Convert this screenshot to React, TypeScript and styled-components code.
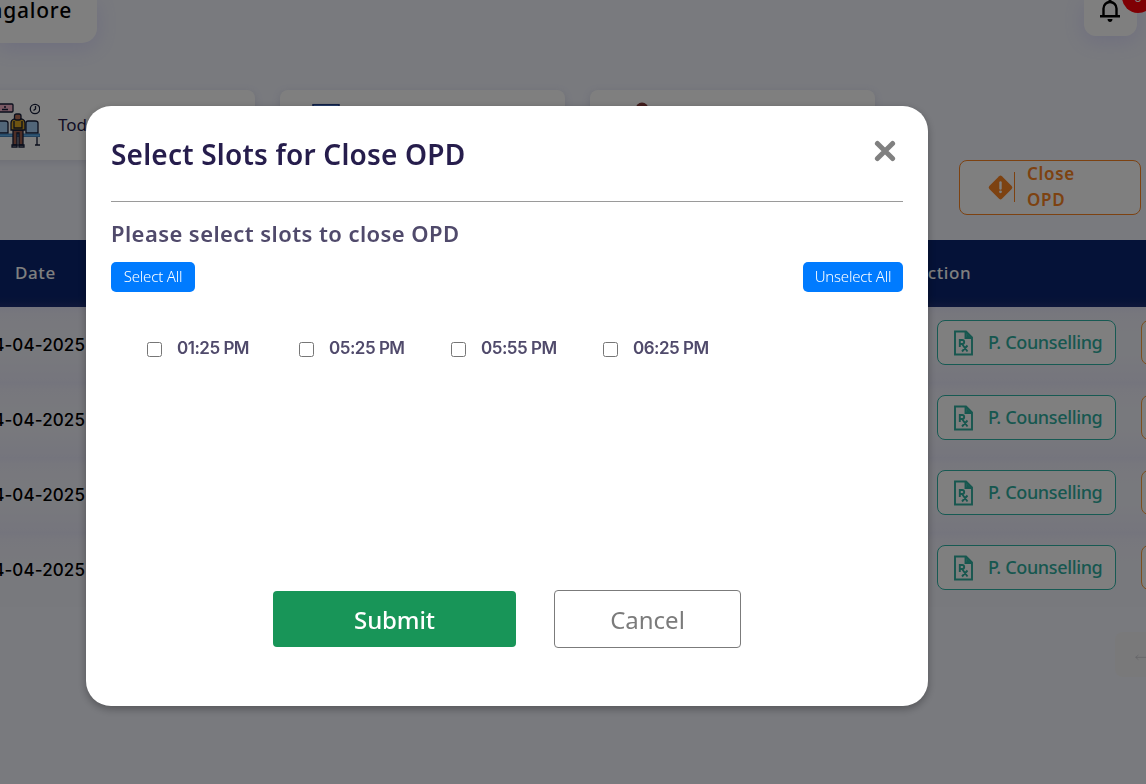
import React, { useState } from "react";
import styled, { createGlobalStyle } from "styled-components";

const GlobalStyle = createGlobalStyle`
  * { box-sizing: border-box; }
  body { margin: 0; overflow: hidden; font-family: "Noto Sans", sans-serif; }
  button { font-family: inherit; padding: 0; cursor: pointer; }
`;

const Page = styled.div`
  width: 1146px;
  height: 784px;
  overflow: hidden;
  background: #f2f4fd;
  color: #000;
`;

const TopBar = styled.header`
  display: flex;
  justify-content: space-between;
  align-items: flex-start;
  height: 90px;
  padding-right: 9px;
`;

const LocationCard = styled.div`
  display: flex;
  justify-content: flex-end;
  width: 97px;
  height: 43px;
  padding-right: 25px;
  border-radius: 0 0 15px 0;
  background: #fff;
  box-shadow: 0 5px 20px rgba(140, 130, 255, 0.2);
  font-size: 21px;
  font-weight: 500;
  line-height: 21px;
  letter-spacing: 0.8px;
  white-space: nowrap;
`;

const BellCard = styled.div`
  position: relative;
  display: flex;
  justify-content: center;
  width: 53px;
  height: 36px;
  padding-right: 2px;
  border-radius: 0 0 12px 12px;
  background: #fff;
  box-shadow: 0 5px 20px rgba(140, 130, 255, 0.2);
`;

const Badge = styled.span`
  position: absolute;
  left: 38px;
  top: -19px;
  width: 32px;
  height: 32px;
  border-radius: 50%;
  background: #ff0008;
  color: #fff;
  font-size: 13px;
  line-height: 32px;
  text-align: center;
`;

const Stats = styled.section`
  display: flex;
  gap: 25px;
  margin-left: -30px;
`;

const StatCard = styled.div`
  display: flex;
  flex: none;
  align-items: flex-start;
  width: 285px;
  height: 70px;
  padding: 11px 0 0 23px;
  border-radius: 8px;
  background: #fff;
  box-shadow: 0 2px 8px rgba(80, 80, 130, 0.15);
`;

const StatLabel = styled.span`
  margin: 13px 0 0 18px;
  color: #261d4c;
  font-size: 17px;
  line-height: 22px;
  white-space: nowrap;
`;

const Actions = styled.div`
  display: flex;
  justify-content: flex-end;
  height: 80px;
  padding-right: 5px;
`;

const CloseOpd = styled.button`
  display: flex;
  align-items: center;
  width: 182px;
  height: 55px;
  padding: 0 40px 1px 27px;
  border: 1px solid #fa8423;
  border-radius: 8px;
  background: #fff;
  color: #fa8423;
  text-align: left;
`;

const CloseOpdText = styled.span`
  margin-left: -1px;
  padding-left: 13px;
  font-size: 17px;
  font-weight: 600;
  line-height: 26px;
  letter-spacing: 0.7px;
`;

const Divider = styled.i`
  width: 1px;
  height: 30px;
  background: #fa8423;
`;

const TableHead = styled.div`
  display: flex;
  align-items: center;
  height: 67px;
  padding: 0 0 2px 15px;
  background: linear-gradient(#0a2470 0 56px, #10286f 61px, #1e2f76);
  color: #fff;
  font-size: 17px;
  font-weight: 500;
  letter-spacing: 0.6px;
`;

const HeadCell = styled.span<{ $width?: number }>`
  flex: none;
  width: ${(p) => (p.$width ? `${p.$width}px` : "auto")};
`;

const Row = styled.div<{ $last?: boolean }>`
  display: flex;
  align-items: center;
  height: 75px;
  background: ${(p) =>
    p.$last
      ? "linear-gradient(#e9e9fb, #efeffb 8px, #f1f2fb 30px, #f1f2fb)"
      : "linear-gradient(#e9e9fb, #efeffb 8px, #f1f2fb 26px, #f1f2fb 48px, #ebebfa)"};
`;

const DateCell = styled.span`
  display: flex;
  flex: none;
  justify-content: flex-end;
  width: 85px;
  margin-right: 852px;
  padding-top: 1px;
  font-family: Inter, sans-serif;
  font-size: 17px;
  font-weight: 500;
  letter-spacing: 0.1px;
  white-space: nowrap;
`;

const CounselButton = styled.button`
  display: flex;
  flex: none;
  align-items: center;
  width: 179px;
  height: 45px;
  margin: -4px 25px 0 0;
  padding-left: 15px;
  gap: 13px;
  border: 1px solid #2fb5a6;
  border-radius: 8px;
  background: #fff;
  color: #2fae9f;
  font-size: 18px;
  font-weight: 500;
  letter-spacing: -0.35px;
  white-space: nowrap;
`;

const ButtonText = styled.span`
  padding-bottom: 2px;
`;

const NextButton = styled(CounselButton)`
  margin-right: 0;
  border-color: #fa9a3c;
`;

const Pager = styled.div`
  display: flex;
  align-items: center;
  height: 45px;
  margin: 25px 0 0 1115px;
  padding: 5px 0 0 20px;
  border-radius: 8px 0 0 8px;
  background: #f3f3f4;
  color: #c3c3cb;
`;

const Overlay = styled.div`
  position: fixed;
  inset: 0;
  padding: 106px 0 0 86px;
  background: rgba(0, 0, 0, 0.5);
`;

const Modal = styled.div`
  display: flex;
  flex-direction: column;
  width: 842px;
  height: 600px;
  padding: 0 25px;
  border-radius: 25px;
  background: #fff;
  box-shadow: 0 3px 9px rgba(0, 0, 0, 0.3);
`;

const ModalHead = styled.div`
  display: flex;
  justify-content: space-between;
  height: 96px;
  padding: 28px 7px 0 0;
  border-bottom: 1px solid #9a9a9a;
`;

const Title = styled.h2`
  margin: 0;
  color: #261d4c;
  font-size: 28px;
  font-weight: 600;
  line-height: 40px;
  letter-spacing: 0.2px;
`;

const CloseIcon = styled.button`
  height: 22px;
  margin-top: 6px;
  border: 0;
  background: none;
`;

const Prompt = styled.h3`
  margin: 16px 0 0;
  color: #504a6b;
  font-size: 22px;
  font-weight: 600;
  line-height: 30px;
  letter-spacing: 0.42px;
`;

const SelectBar = styled.div`
  display: flex;
  justify-content: space-between;
  margin-top: 14px;
`;

const SmallButton = styled.button<{ $width: number }>`
  width: ${(p) => p.$width}px;
  height: 30px;
  padding-bottom: 2px;
  border: 0;
  border-radius: 5px;
  background: #007bff;
  color: #fff;
  font-size: 15px;
  font-weight: 300;
  letter-spacing: -0.2px;
`;

const Slots = styled.div`
  display: flex;
  padding: 43px 0 0 35px;
`;

const Slot = styled.label`
  display: flex;
  align-items: center;
  width: 152px;
  height: 28px;
  color: #504a6b;
  font-family: Inter, sans-serif;
  font-size: 17px;
  font-weight: 600;
  white-space: nowrap;
`;

const SlotText = styled.span`
  padding-bottom: 2px;
  letter-spacing: -0.5px;
`;

const Check = styled.input`
  width: 15px;
  height: 15px;
  margin: 1px 15px 0 1px;
`;

const Footer = styled.div`
  display: flex;
  align-items: center;
  gap: 38px;
  margin: auto 0 58px 162px;
`;

const Submit = styled.button`
  width: 243px;
  height: 56px;
  border: 0;
  border-radius: 4px;
  background: #189558;
  color: #fff;
  font-size: 24px;
  font-weight: 500;
  line-height: 57px;
  letter-spacing: -0.1px;
`;

const Cancel = styled.button`
  width: 187px;
  height: 58px;
  border: 1px solid #7b7b7b;
  border-radius: 4px;
  background: #fff;
  color: #7b7b7b;
  font-size: 24px;
`;

const BellIcon = () => (
  <svg width="22" height="25" viewBox="0 0 22 25" fill="none">
    <path d="M4.500 15V8.500a6.500 6.500 0 0 1 13 0V15M1 16.200h20" stroke="#000" strokeWidth="2.400" />
    <path d="M11 2V0" stroke="#000" strokeWidth="3" />
    <path d="M8.500 19h5c0 4-5 4-5 0Z" fill="#000" />
  </svg>
);

const WaitingIcon = () => (
  <svg width="47" height="47" viewBox="0 0 47 47" fill="none" stroke="#141c38" strokeWidth="1.300">
    <rect x="0" y="3" width="20" height="8" rx="1" fill="#f5b3c8" />
    <path d="M9 8.500h6M11 6h2" />
    <circle cx="42" cy="8" r="4.700" fill="#fff" />
    <path d="M42.500 5v3l-2 1.500" />
    <path d="M2 32V22q0-2 2-2h8q3 0 3 2v10ZM33 32V22q0-2 2-2h7q3 0 3 2v10Z" fill="#a5cdf3" />
    <path d="M0 33h47v2.500H0Z" fill="#62afe8" stroke="#2c6fae" strokeWidth="0.800" />
    <path d="M44 36v8M42 44h5M6 36v8" />
    <path d="M20 29h10v15h-4V32h-2v12h-4Z" fill="#9c5e4f" />
    <path d="M21 18h8q3 1 3 4v7H18v-7q0-3 3-4Z" fill="#dca923" />
    <path d="M21 20v7h8v-7M19 44h5v2h-5ZM26 44h5v2h-5Z" />
    <rect x="21.500" y="13" width="6.500" height="6" rx="2" fill="#b97158" />
  </svg>
);

const MonitorIcon = () => (
  <svg width="44" height="44" viewBox="0 0 44 44">
    <rect x="10" y="3.700" width="26" height="32" fill="#6fa8ff" stroke="#233f8c" strokeWidth="1.500" />
  </svg>
);

const PersonIcon = () => (
  <svg width="50" height="44" viewBox="0 0 50 44">
    <circle cx="29" cy="8" r="6.500" fill="#823a38" />
    <path d="M17 40V22q12-12 24 0v18Z" fill="#6fa8ff" />
  </svg>
);

const WarningIcon = () => (
  <svg width="27" height="27" viewBox="0 0 27 27">
    <rect x="4.600" y="4.600" width="17.800" height="17.800" rx="2" transform="rotate(45 13.500 13.500)" fill="#fa8423" />
    <path d="M13.500 8.500v6" stroke="#fff" strokeWidth="2.400" strokeLinecap="round" />
    <circle cx="13.500" cy="17.800" r="1.400" fill="#fff" />
  </svg>
);

const RxIcon = () => (
  <svg width="22" height="26" viewBox="0 0 22 26" fill="none" stroke="currentColor">
    <path d="M2 1.500h11l6 6v17H2ZM12.500 1.500V8h6.500" strokeWidth="1.900" />
    <path d="M13.500 3v4h4Z" fill="currentColor" strokeWidth="0.500" />
    <path d="M6.800 17V10h2.400a2 2 0 0 1 0 4H6.800M9 14l5.500 7.500M14.500 15.500 9 21.500" strokeWidth="1.900" />
  </svg>
);

const CrossIcon = () => (
  <svg width="22" height="22" viewBox="0 0 22 22">
    <path d="m3.400 3.400 15.200 15.200M18.600 3.400 3.400 18.600" stroke="#808080" strokeWidth="5" strokeLinecap="round" />
  </svg>
);

const ArrowIcon = () => (
  <svg width="16" height="12" viewBox="0 0 16 12" fill="none" stroke="currentColor" strokeWidth="1">
    <path d="M16 6.500H1M5 3 1 6.500 5 10" />
  </svg>
);

const slots = ["01:25 PM", "05:25 PM", "05:55 PM", "06:25 PM"];
const rows = [0, 1, 2, 3];

export default function App() {
  const [chosen, setChosen] = useState<string[]>([]);
  const toggle = (slot: string) =>
    setChosen((list) => (list.includes(slot) ? list.filter((s) => s !== slot) : [...list, slot]));

  return (
    <>
      <GlobalStyle />
      <Page>
        <TopBar>
          <LocationCard>Bangalore</LocationCard>
          <BellCard>
            <BellIcon />
            <Badge>0</Badge>
          </BellCard>
        </TopBar>
        <Stats>
          <StatCard>
            <WaitingIcon />
            <StatLabel>Today</StatLabel>
          </StatCard>
          <StatCard>
            <MonitorIcon />
          </StatCard>
          <StatCard>
            <PersonIcon />
          </StatCard>
        </Stats>
        <Actions>
          <CloseOpd>
            <WarningIcon />
            <Divider />
            <CloseOpdText>
              Close
              <br />
              OPD
            </CloseOpdText>
          </CloseOpd>
        </Actions>
        <TableHead>
          <HeadCell $width={901}>Date</HeadCell>
          <HeadCell>Action</HeadCell>
        </TableHead>
        {rows.map((row) => (
          <Row key={row} $last={row === rows.length - 1}>
            <DateCell>24-04-2025</DateCell>
            <CounselButton>
              <RxIcon />
              <ButtonText>P. Counselling</ButtonText>
            </CounselButton>
            <NextButton />
          </Row>
        ))}
        <Pager>
          <ArrowIcon />
        </Pager>
      </Page>
      <Overlay>
        <Modal>
          <ModalHead>
            <Title>Select Slots for Close OPD</Title>
            <CloseIcon aria-label="Close">
              <CrossIcon />
            </CloseIcon>
          </ModalHead>
          <Prompt>Please select slots to close OPD</Prompt>
          <SelectBar>
            <SmallButton $width={84} onClick={() => setChosen(slots)}>
              Select All
            </SmallButton>
            <SmallButton $width={100} onClick={() => setChosen([])}>
              Unselect All
            </SmallButton>
          </SelectBar>
          <Slots>
            {slots.map((slot) => (
              <Slot key={slot}>
                <Check type="checkbox" checked={chosen.includes(slot)} onChange={() => toggle(slot)} />
                <SlotText>{slot}</SlotText>
              </Slot>
            ))}
          </Slots>
          <Footer>
            <Submit>Submit</Submit>
            <Cancel>Cancel</Cancel>
          </Footer>
        </Modal>
      </Overlay>
    </>
  );
}
